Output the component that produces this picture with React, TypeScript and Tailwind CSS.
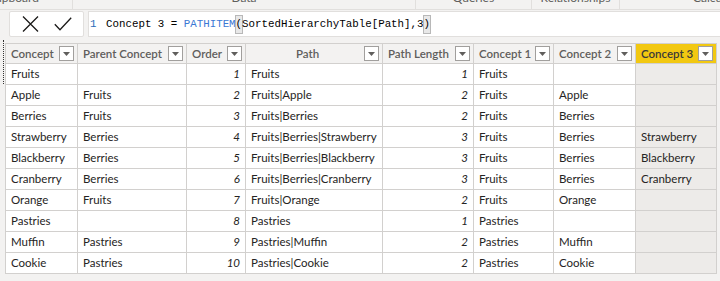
import React from 'react';

interface Row {
    concept: string;
    parent: string;
    order: number;
    path: string[];
    length: number;
    c1: string;
    c2: string;
    c3: string;
}

const rows: Row[] = [
    { concept: 'Fruits', parent: '', order: 1, path: ['Fruits'], length: 1, c1: 'Fruits', c2: '', c3: '' },
    { concept: 'Apple', parent: 'Fruits', order: 2, path: ['Fruits', 'Apple'], length: 2, c1: 'Fruits', c2: 'Apple', c3: '' },
    { concept: 'Berries', parent: 'Fruits', order: 3, path: ['Fruits', 'Berries'], length: 2, c1: 'Fruits', c2: 'Berries', c3: '' },
    { concept: 'Strawberry', parent: 'Berries', order: 4, path: ['Fruits', 'Berries', 'Strawberry'], length: 3, c1: 'Fruits', c2: 'Berries', c3: 'Strawberry' },
    { concept: 'Blackberry', parent: 'Berries', order: 5, path: ['Fruits', 'Berries', 'Blackberry'], length: 3, c1: 'Fruits', c2: 'Berries', c3: 'Blackberry' },
    { concept: 'Cranberry', parent: 'Berries', order: 6, path: ['Fruits', 'Berries', 'Cranberry'], length: 3, c1: 'Fruits', c2: 'Berries', c3: 'Cranberry' },
    { concept: 'Orange', parent: 'Fruits', order: 7, path: ['Fruits', 'Orange'], length: 2, c1: 'Fruits', c2: 'Orange', c3: '' },
    { concept: 'Pastries', parent: '', order: 8, path: ['Pastries'], length: 1, c1: 'Pastries', c2: '', c3: '' },
    { concept: 'Muffin', parent: 'Pastries', order: 9, path: ['Pastries', 'Muffin'], length: 2, c1: 'Pastries', c2: 'Muffin', c3: '' },
    { concept: 'Cookie', parent: 'Pastries', order: 10, path: ['Pastries', 'Cookie'], length: 2, c1: 'Pastries', c2: 'Cookie', c3: '' },
];

const columns = [
    { name: 'Concept', width: 72 },
    { name: 'Parent Concept', width: 109 },
    { name: 'Order', width: 59 },
    { name: 'Path', width: 137, center: true },
    { name: 'Path Length', width: 91 },
    { name: 'Concept 1', width: 80 },
    { name: 'Concept 2', width: 82 },
    { name: 'Concept 3', width: 81, selected: true },
];

function FilterButton() {
    return (
        <span className="flex-none w-[15px] h-[15px] border border-[#a19f9d] bg-white flex items-center justify-center">
            <svg width="7" height="4" viewBox="0 0 7 4">
                <path d="M0 0h7L3.5 4z" fill="#605e5c" />
            </svg>
        </span>
    );
}

function PathText({ parts }: { parts: string[] }) {
    return (
        <>
            {parts.map((p, i) => (
                <React.Fragment key={i}>
                    {i > 0 && <span className="text-[#252423]">|</span>}
                    {p}
                </React.Fragment>
            ))}
        </>
    );
}

export default function App() {
    const cell = 'border border-[#d2d0ce] h-[21px] px-[5px] whitespace-nowrap overflow-hidden';

    return (
        <div
            className="relative w-[720px] h-[281px] overflow-hidden bg-[#f3f2f1] text-[#252423]"
            style={{ fontFamily: 'Lato, "Open Sans", sans-serif' }}
        >
            {/* Ribbon group labels (cut off at top) */}
            <div className="h-[10px] border-b border-[#e1dfdd] flex overflow-hidden text-[12px] text-[#605e5c]">
                <div className="flex-none w-[118px] ml-[-45px] border-r border-[#e1dfdd] text-center">
                    <div className="-mt-[8px] leading-[12px]">Clipboard</div>
                </div>
                <div className="flex-none w-[343px] border-r border-[#e1dfdd] text-center">
                    <div className="-mt-[8px] leading-[12px]">Data</div>
                </div>
                <div className="flex-none w-[116px] border-r border-[#e1dfdd] text-center">
                    <div className="-mt-[8px] leading-[12px]">Queries</div>
                </div>
                <div className="flex-none w-[88px] border-r border-[#e1dfdd] text-center">
                    <div className="-mt-[8px] leading-[12px]">Relationships</div>
                </div>
                <div className="flex-none w-[210px] text-center">
                    <div className="-mt-[8px] leading-[12px]">Calculations</div>
                </div>
            </div>

            {/* Formula bar */}
            <div className="flex gap-[4px] pl-[9px] mt-[1px] h-[26px]">
                <div className="flex-none w-[75px] bg-white border border-[#e1dfdd] rounded-[2px] flex items-center justify-center gap-[15px]">
                    <svg width="17" height="16" viewBox="0 0 17 16">
                        <path d="M1 0.5L16 15.5M16 0.5L1 15.5" stroke="#1b1a19" strokeWidth="1.3" fill="none" />
                    </svg>
                    <svg width="18" height="14" viewBox="0 0 18 14">
                        <path d="M0.8 7.2L6 12.8L17.2 0.8" stroke="#1b1a19" strokeWidth="1.3" fill="none" />
                    </svg>
                </div>
                <div
                    className="flex-1 bg-white border border-[#e1dfdd] border-r-0 flex items-center pl-[1px] text-[10.8px] text-black"
                    style={{ fontFamily: '"Liberation Mono", "DejaVu Sans Mono", monospace' }}
                >
                    <span className="text-[#2b6cb8] w-[16px]">1</span>
                    <span className="whitespace-pre">Concept 3 = </span>
                    <span className="text-[#3b78d4]">PATHITEM</span>
                    <span className="bg-[#e8e8e8] outline outline-1 outline-[#b8b8b8] leading-[17px]">(</span>
                    <span className="whitespace-pre">SortedHierarchyTable[Path],3</span>
                    <span className="bg-[#e8e8e8] outline outline-1 outline-[#b8b8b8] leading-[17px]">)</span>
                </div>
            </div>

            {/* Table */}
            <div className="pl-[5px] pt-[6px]">
                <table className="table-fixed border-collapse w-[711px] text-[11.5px]">
                    <colgroup>
                        {columns.map((c) => (
                            <col key={c.name} style={{ width: c.width }} />
                        ))}
                    </colgroup>
                    <thead>
                        <tr>
                            {columns.map((c) => (
                                <th
                                    key={c.name}
                                    className={`border border-[#d2d0ce] h-[20px] p-0 font-semibold text-[11.5px] ${
                                        c.selected ? 'bg-[#f2c811] text-[#3b3a39]' : 'bg-[#f3f2f1] text-[#605e5c]'
                                    }`}
                                >
                                    <div className="flex items-center h-[19px] pl-[5px] pr-[3px]">
                                        <span className={`flex-1 whitespace-nowrap ${c.center ? 'text-center' : 'text-left'}`}>
                                            {c.name}
                                        </span>
                                        <FilterButton />
                                    </div>
                                </th>
                            ))}
                        </tr>
                    </thead>
                    <tbody>
                        {rows.map((r) => (
                            <tr key={r.order}>
                                <td className={`${cell} bg-white`}>{r.concept}</td>
                                <td className={`${cell} bg-white`}>{r.parent}</td>
                                <td className={`${cell} bg-white text-right italic`}>{r.order}</td>
                                <td className={`${cell} bg-white`}>
                                    <PathText parts={r.path} />
                                </td>
                                <td className={`${cell} bg-white text-right italic`}>{r.length}</td>
                                <td className={`${cell} bg-white`}>{r.c1}</td>
                                <td className={`${cell} bg-white`}>{r.c2}</td>
                                <td className={`${cell} bg-[#edebe9]`}>{r.c3}</td>
                            </tr>
                        ))}
                    </tbody>
                </table>
            </div>

            {/* row selector dotted marker */}
            <span className="absolute left-[3px] top-[40px] h-[44px] border-l border-dotted border-[#323130]" />
        </div>
    );
}
